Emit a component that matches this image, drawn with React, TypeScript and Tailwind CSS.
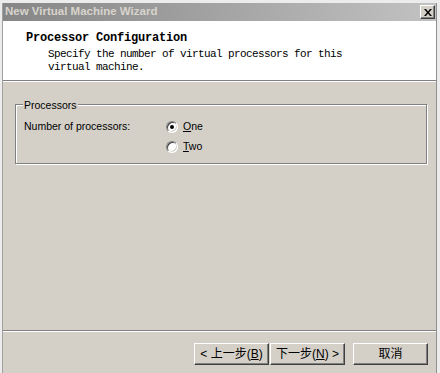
import React from "react";

const sans = { fontFamily: '"Liberation Sans", Arial, sans-serif' };
const mono = { fontFamily: '"Liberation Mono", "Courier New", monospace' };
const cjk = { fontFamily: '"Liberation Sans", "Noto Sans CJK SC", sans-serif' };

function Radio({ checked }: { checked?: boolean }) {
  return (
    <span className="relative inline-block w-[12px] h-[12px] rounded-full bg-white border border-t-[#808080] border-l-[#808080] border-r-white border-b-white shadow-[inset_1px_1px_#404040,inset_-1px_-1px_#d4d0c8]">
      {checked && (
        <span className="absolute left-[3px] top-[3px] w-[4px] h-[4px] rounded-full bg-black" />
      )}
    </span>
  );
}

function Btn({ children, className = "" }: { children: React.ReactNode; className?: string }) {
  return (
    <div
      className={
        "h-[22px] w-[75px] flex items-center justify-center text-[12px] text-black bg-[#d4d0c8] border border-t-white border-l-white border-r-[#404040] border-b-[#404040] shadow-[inset_-1px_-1px_#808080] " +
        className
      }
      style={cjk}
    >
      {children}
    </div>
  );
}

export default function App() {
  return (
    <div className="w-[440px] h-[373px] bg-[#ececec] pt-[3px] pl-[2px] pr-[3px] overflow-hidden">
      <div className="h-[370px] flex flex-col border-l border-r border-l-[#a0a0a0] border-r-[#909090] bg-[#d4d0c8]">
        {/* Title bar */}
        <div className="h-[18px] flex items-center justify-between pl-[2px] pr-[1px] bg-gradient-to-r from-[#868686] to-[#c2c2c2]">
          <span className="text-[11.5px] font-bold text-[#d8d4cc] leading-none" style={sans}>
            New Virtual Machine Wizard
          </span>
          <div className="w-[15px] h-[14px] flex items-center justify-center bg-[#d4d0c8] border border-t-white border-l-white border-r-[#404040] border-b-[#404040] shadow-[inset_-1px_-1px_#808080]">
            <svg width="8" height="7" viewBox="0 0 8 7">
              <path d="M0 0h2l2 2.5L6 0h2L5 3.5 8 7H6L4 4.5 2 7H0l3-3.5z" fill="#000" />
            </svg>
          </div>
        </div>

        {/* Header */}
        <div className="h-[60px] bg-white border-b border-b-[#808080] shadow-[0_1px_white] pl-[23px] pt-[11px]">
          <div className="text-[12px] font-bold leading-[13px] tracking-[-0.2px] text-black" style={mono}>
            Processor Configuration
          </div>
          <div className="pl-[22px] pt-[3px] text-[11px] leading-[13px] tracking-[-0.6px] text-black" style={mono}>
            <div>Specify the number of virtual processors for this</div>
            <div>virtual machine.</div>
          </div>
        </div>

        {/* Body */}
        <div className="flex-1 pt-[23px] pl-[12px] pr-[9px]">
          <div className="relative h-[60px] border border-[#808080] shadow-[inset_1px_1px_white,1px_1px_white] pl-[8px] pt-[12px]">
            <span
              className="absolute left-[7px] top-[-6px] px-[1px] bg-[#d4d0c8] text-[10.5px] leading-[13px] text-black"
              style={sans}
            >
              Processors
            </span>
            <div className="flex text-[10.5px] text-black" style={sans}>
              <div className="w-[142px] h-[20px] flex items-center">Number of processors:</div>
              <div className="flex flex-col">
                <div className="h-[20px] flex items-center gap-[5px]">
                  <Radio checked />
                  <span>
                    <span className="underline">O</span>ne
                  </span>
                </div>
                <div className="h-[20px] flex items-center gap-[5px]">
                  <Radio />
                  <span>
                    <span className="underline">T</span>wo
                  </span>
                </div>
              </div>
            </div>
          </div>
        </div>

        {/* Separator */}
        <div className="h-[2px] border-t border-t-[#808080] border-b border-b-white" />

        {/* Footer */}
        <div className="h-[41px] flex justify-end pt-[11px] pr-[8px]">
          <Btn className="w-[74px]">
            &lt; 上一步(<span className="underline">B</span>)
          </Btn>
          <Btn className="ml-[1px]">
            下一步(<span className="underline">N</span>) &gt;
          </Btn>
          <Btn className="ml-[8px]">取消</Btn>
        </div>
      </div>
    </div>
  );
}
